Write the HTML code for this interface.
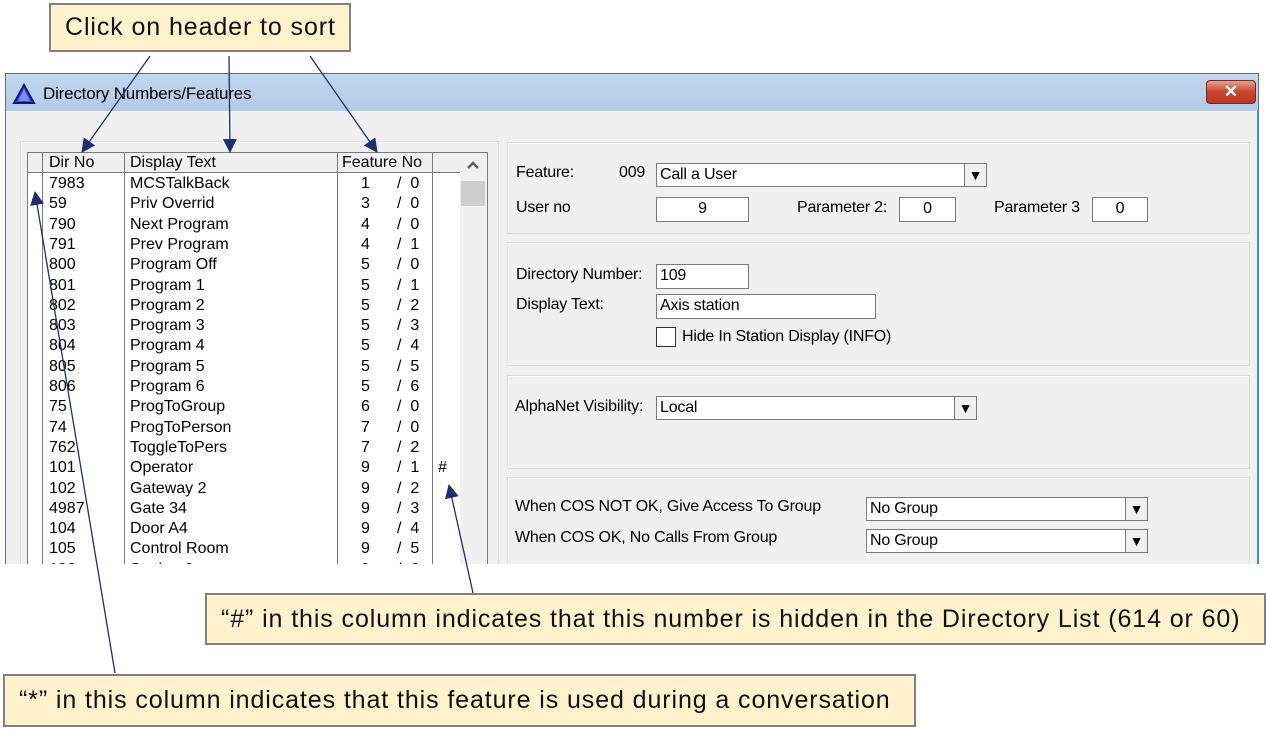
<!DOCTYPE html>
<html><head><style>
*{margin:0;padding:0;box-sizing:border-box}
body{width:1266px;height:736px;background:#fff;position:relative;overflow:hidden;font-family:"Liberation Sans",sans-serif}
.a{position:absolute}
.w{font-size:16px;color:#000;white-space:nowrap;letter-spacing:-0.2px}
.co{position:absolute;background:#fff2cc;border:2px solid #808080;font-size:25px;letter-spacing:0.9px;color:#111;white-space:nowrap;display:flex;align-items:center;padding-left:14px}
.grp{position:absolute;border:1px solid #dcdcdc;box-shadow:inset 1px 1px 0 #fff}
.inp{position:absolute;background:#fff;border:1px solid #7a7a7a;font-size:16px;line-height:22px;padding-left:3px;white-space:nowrap;letter-spacing:-0.2px}
.dd{position:absolute;top:0;right:0;width:22px;height:100%;border-left:1px solid #7a7a7a;background:#f0f0f0;font-size:14px;text-align:center;line-height:22px}
.row{position:absolute;height:20px;font-size:16px;line-height:20px;letter-spacing:0}
</style></head><body>

<div class="a" style="left:5px;top:73px;width:1254px;height:491px;background:#f0f0f0;border:1px solid #5a6d85;border-bottom:none"></div>
<div class="a" style="left:6px;top:74px;width:1252px;height:37px;background:linear-gradient(#c2d7ee,#b3cbe6)"></div>
<div class="a" style="left:1257px;top:111px;width:2px;height:453px;background:#3a8fd6"></div>
<svg class="a" style="left:12px;top:83px" width="24" height="22"><polygon points="12,2 22,20 2,20" fill="#3548d8" stroke="#0b1a70" stroke-width="2"/><polygon points="12,6 18,18 6,18" fill="#7d8cf0"/></svg>
<div class="a w" style="left:43px;top:84px;font-size:17px">Directory Numbers/Features</div>
<div class="a" style="left:1206px;top:80px;width:50px;height:24px;border-radius:4px;border:1px solid #6b2a2a;background:linear-gradient(#e8a090,#c8442c 50%,#b83a24);color:#fff;font-weight:bold;font-size:17px;text-align:center;line-height:22px">✕</div>

<div class="grp" style="left:20px;top:141px;width:479px;height:430px"></div>
<div class="a" style="left:27px;top:152px;width:461px;height:420px;background:#fff;border:1px solid #7a7a7a"></div>
<div class="a" style="left:28px;top:153px;width:432px;height:20px;background:#f0f0f0;border-bottom:1px solid #7a7a7a"></div>
<div class="a" style="left:42px;top:153px;width:1px;height:420px;background:#7a7a7a"></div>
<div class="a" style="left:124px;top:153px;width:1px;height:420px;background:#7a7a7a"></div>
<div class="a" style="left:337px;top:153px;width:1px;height:420px;background:#7a7a7a"></div>
<div class="a" style="left:432px;top:153px;width:1px;height:420px;background:#7a7a7a"></div>
<div class="a" style="left:460px;top:153px;width:27px;height:420px;background:#f0f0f0"></div>
<div class="a" style="left:461px;top:181px;width:24px;height:25px;background:#cdcdcd"></div>
<svg class="a" style="left:466px;top:160px" width="14" height="10"><polyline points="2,8 7,3 12,8" fill="none" stroke="#606060" stroke-width="2.5"/></svg>
<div class="row" style="left:49px;top:153px">Dir No</div>
<div class="row" style="left:130px;top:153px">Display Text</div>
<div class="row" style="left:342px;top:153px">Feature No</div>

<div id="rows"></div>
<script>
var d=[["","7983","MCSTalkBack","1","0",""],["*","59","Priv Overrid","3","0",""],["","790","Next Program","4","0",""],["","791","Prev Program","4","1",""],["","800","Program Off","5","0",""],["","801","Program 1","5","1",""],["","802","Program 2","5","2",""],["","803","Program 3","5","3",""],["","804","Program 4","5","4",""],["","805","Program 5","5","5",""],["","806","Program 6","5","6",""],["","75","ProgToGroup","6","0",""],["","74","ProgToPerson","7","0",""],["","762","ToggleToPers","7","2",""],["","101","Operator","9","1","#"],["","102","Gateway 2","9","2",""],["","4987","Gate 34","9","3",""],["","104","Door A4","9","4",""],["","105","Control Room","9","5",""],["","106","Station 6","9","6",""]];
var h="";d.forEach(function(r,i){var t=174+i*20.3;
h+='<div class="row" style="left:31px;top:'+(t-2)+'px;font-size:11px">'+(r[0]?'×':'')+'</div>';
h+='<div class="row" style="left:49px;top:'+t+'px">'+r[1]+'</div>';
h+='<div class="row" style="left:130px;top:'+t+'px">'+r[2]+'</div>';
h+='<div class="row" style="left:361px;top:'+t+'px">'+r[3]+'</div>';
h+='<div class="row" style="left:397px;top:'+t+'px">/ &nbsp;'+r[4]+'</div>';
h+='<div class="row" style="left:438px;top:'+t+'px">'+r[5]+'</div>';});
document.getElementById("rows").innerHTML=h;
</script>

<div class="grp" style="left:507px;top:142px;width:743px;height:92px"></div>
<div class="a w" style="left:516px;top:164px">Feature:</div>
<div class="a w" style="left:619px;top:164px">009</div>
<div class="inp" style="left:656px;top:163px;width:331px;height:24px">Call a User<div class="dd">▼</div></div>
<div class="a w" style="left:516px;top:199px">User no</div>
<div class="inp" style="left:656px;top:197px;width:93px;height:25px;text-align:center;padding:0">9</div>
<div class="a w" style="left:797px;top:199px">Parameter 2:</div>
<div class="inp" style="left:899px;top:197px;width:57px;height:25px;text-align:center;padding:0">0</div>
<div class="a w" style="left:994px;top:199px">Parameter 3</div>
<div class="inp" style="left:1092px;top:197px;width:56px;height:25px;text-align:center;padding:0">0</div>

<div class="grp" style="left:507px;top:242px;width:743px;height:124px"></div>
<div class="a w" style="left:516px;top:266px">Directory Number:</div>
<div class="inp" style="left:656px;top:264px;width:93px;height:25px">109</div>
<div class="a w" style="left:516px;top:296px">Display Text:</div>
<div class="inp" style="left:656px;top:294px;width:220px;height:25px">Axis station</div>
<div class="a" style="left:656px;top:327px;width:20px;height:20px;background:#fff;border:1px solid #333"></div>
<div class="a w" style="left:682px;top:328px">Hide In Station Display (INFO)</div>

<div class="grp" style="left:507px;top:375px;width:743px;height:94px"></div>
<div class="a w" style="left:515px;top:398px">AlphaNet Visibility:</div>
<div class="inp" style="left:656px;top:396px;width:321px;height:24px">Local<div class="dd">▼</div></div>

<div class="grp" style="left:507px;top:477px;width:743px;height:100px"></div>
<div class="a w" style="left:515px;top:498px">When COS NOT OK, Give Access To Group</div>
<div class="inp" style="left:866px;top:497px;width:282px;height:24px">No Group<div class="dd">▼</div></div>
<div class="a w" style="left:515px;top:529px">When COS OK, No Calls From Group</div>
<div class="inp" style="left:866px;top:529px;width:282px;height:24px">No Group<div class="dd">▼</div></div>

<div class="a" style="left:0;top:564px;width:1266px;height:172px;background:#fff"></div>

<div class="co" style="left:49px;top:3px;width:302px;height:49px">Click on header to sort</div>
<div class="co" style="left:205px;top:593px;width:1061px;height:52px">“#” in this column indicates that this number is hidden in the Directory List (614 or 60)</div>
<div class="co" style="left:3px;top:674px;width:913px;height:53px">“*” in this column indicates that this feature is used during a conversation</div>

<svg class="a" style="left:0;top:0" width="1266" height="736">
<defs><marker id="n" markerWidth="14" markerHeight="14" refX="13" refY="7" orient="auto" markerUnits="userSpaceOnUse"><polygon points="0,0 14,7 0,14" fill="#1f2f6e"/></marker></defs>
<g stroke="#1f2f6e" stroke-width="1.3" fill="none">
<line x1="150" y1="56" x2="82" y2="152" marker-end="url(#n)"/>
<line x1="229" y1="56" x2="230" y2="152" marker-end="url(#n)"/>
<line x1="310" y1="56" x2="377" y2="152" marker-end="url(#n)"/>
<line x1="473" y1="593" x2="449" y2="485" marker-end="url(#n)"/>
<line x1="115" y1="673" x2="35" y2="192" marker-end="url(#n)"/>
</g></svg>
</body></html>
